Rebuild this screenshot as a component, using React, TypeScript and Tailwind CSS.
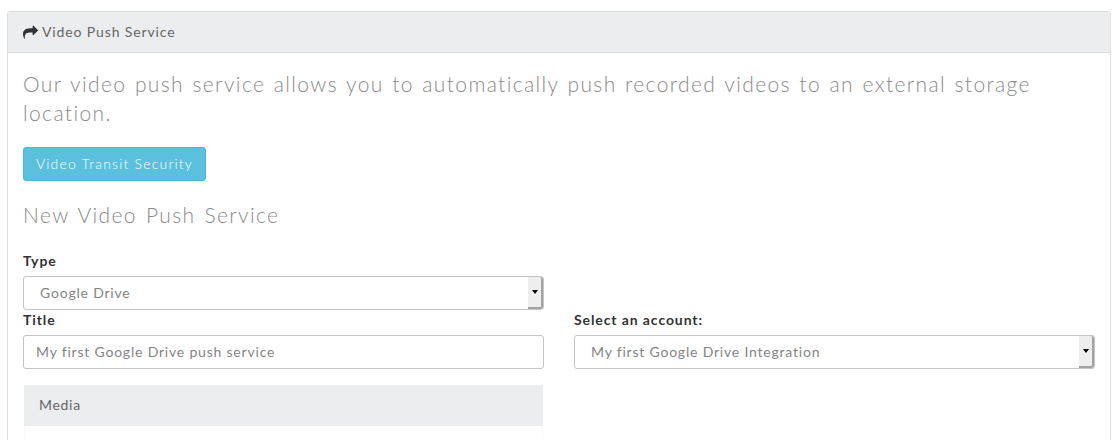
import React from 'react';

function FakeSelect({ label }: { label: string }) {
  return (
    <div className="flex h-[34px] w-full rounded-[3px] border border-[#c4c4c4] bg-white text-[14px] tracking-[0.8px] text-[#858585]">
      <div className="flex flex-1 items-center pb-[2px] pl-4">{label}</div>
      {/* Arrow box */}
      <div className="flex w-[15px] items-center justify-center rounded-r-[3px] border-r-2 border-b-2 border-[#a3a3a3] bg-[#eeeeee]">
        <span className="h-0 w-0 border-x-[3px] border-t-[4px] border-x-transparent border-t-black" />
      </div>
    </div>
  );
}

function Label({ children }: { children: React.ReactNode }) {
  return <label className="block h-[17px] text-[14px] leading-[15px] font-bold tracking-[0.9px] text-[#333]">{children}</label>;
}

export default function App() {
  return (
    <div className="h-[440px] overflow-hidden bg-white pt-[11px] pl-[7px] font-['Lato',sans-serif] tracking-[0.7px]">
      <div className="h-[460px] w-[1104px] rounded-[3px] border border-[#dddddd]">
        {/* Header */}
        <div className="flex h-[41px] items-center gap-[4px] border-b border-[#dddddd] bg-[#ecedef] pl-[15px] text-[14px] tracking-[0.87px] text-[#666]">
          <svg className="h-[15px] w-[15px] text-[#333]" viewBox="0 0 1792 1792" fill="currentColor">
            <path d="M1792 640q0 26-19 45l-512 512q-19 19-45 19t-45-19-19-45v-256h-224q-98 0-175.500 6t-154 21.500-133 42.500-105.500 69.500-80 101-48.500 138.500-17.500 181q0 55 5 123 0 6 2.500 23.500t2.500 26.500q0 15-8.500 25t-23.500 10q-16 0-28-17-7-9-13-22t-13.500-30-10.500-24q-127-285-127-451 0-199 53-333 162-403 875-403h224v-256q0-26 19-45t45-19 45 19l512 512q19 19 19 45z" />
          </svg>
          <span className="pb-[2px]">Video Push Service</span>
        </div>

        {/* Body */}
        <div className="px-[15px] pt-[16px]">
          <p className="w-[1040px] text-[21px] leading-[29px] font-light tracking-[1.38px] [word-spacing:1.4px] text-[#8a8a8a]">
            Our video push service allows you to automatically push recorded videos to an external storage location.
          </p>

          <button className="mt-[20px] flex h-[34px] w-[183px] items-center justify-center rounded-[3px] border border-[#46b8da] bg-[#5bc0de] pb-[2px] text-[14px] font-light tracking-[1.2px] text-white">
            Video Transit Security
          </button>

          <h3 className="mt-[21px] text-[21px] leading-[26px] font-light tracking-[1.36px] [word-spacing:2px] text-[#8a8a8a]">New Video Push Service</h3>

          <div className="mt-[25px] grid w-[1072px] grid-cols-[521px_521px] gap-x-[30px]">
            <div>
              <Label>Type</Label>
              <div className="mt-[6px]">
                <FakeSelect label="Google Drive" />
              </div>
            </div>
            <div />

            <div className="mt-[2px]">
              <Label>Title</Label>
              <input
                readOnly
                value="My first Google Drive push service"
                className="mt-[6px] block h-[34px] w-full rounded-[3px] border border-[#c4c4c4] bg-white px-3 pb-[2px] text-[14px] tracking-[0.8px] text-[#858585] outline-none"
              />
              {/* Media */}
              <div className="mx-px mt-4 flex h-[41px] items-center bg-[#ecedef] pb-[2px] pl-[15px] text-[14px] text-[#666]">Media</div>
              <div className="mx-px h-[20px] border-x border-[#fafafa]" />
            </div>

            <div className="mt-[2px]">
              <Label>Select an account:</Label>
              <div className="mt-[6px]">
                <FakeSelect label="My first Google Drive Integration" />
              </div>
            </div>
          </div>
        </div>
      </div>
    </div>
  );
}
